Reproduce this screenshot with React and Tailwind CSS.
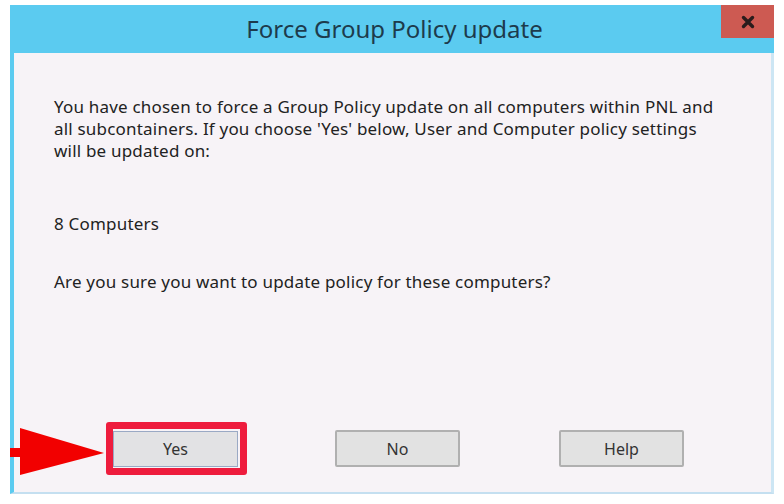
export default function App() {
  const font = { fontFamily: '"Noto Sans", "Open Sans", sans-serif' };
  return (
    <div className="w-[784px] h-[504px] bg-white relative overflow-hidden" style={font}>
      <div className="absolute left-[10px] top-[5px] w-[764px] h-[489px] flex flex-col">
        <div className="h-[48px] bg-[#5bcbf0] flex items-start relative">
          <div className="flex-1 h-full flex items-center justify-center pl-[5px]">
            <span className="text-[24px] text-[#1d3b4c]">Force Group Policy update</span>
          </div>
          <div className="absolute right-0 top-0 w-[53px] h-[33px] bg-[#cd5a52] flex items-center justify-center">
            <svg width="16" height="14" viewBox="0 0 16 14">
              <path d="M3.5 2.5 L12.5 11.5 M12.5 2.5 L3.5 11.5" stroke="#2a1c1c" strokeWidth="3.4" strokeLinecap="round" />
            </svg>
          </div>
        </div>
        <div className="flex-1 flex flex-col bg-[#f7f3f7] border-l-[4px] border-r-[3px] border-b-[2px] border-l-[#5bcbf0] border-r-[#cde6f4] border-b-[#c4dff0]">
          <div className="pl-[40px] pt-[43px] text-[17px] leading-[22px] text-[#222] tracking-[0.2px]">
            <p>You have chosen to force a Group Policy update on all computers within PNL and<br />all subcontainers. If you choose 'Yes' below, User and Computer policy settings<br />will be updated on:</p>
            <p className="mt-[51px]">8 Computers</p>
            <p className="mt-[36px]">Are you sure you want to update policy for these computers?</p>
          </div>
          <div className="mt-auto pb-[17px] pl-[92px] flex items-center">
            <div className="border-[7px] border-[#ee1c3d] rounded-[3px] pt-[2px] pb-[1px] pr-[2px]">
              <div className="w-[125px] h-[36px] bg-[#e2e2e4] border border-[#9aa9c4] flex items-center justify-center text-[16px] text-[#333]">Yes</div>
            </div>
            <div className="ml-[88px] w-[125px] h-[37px] bg-[#e2e2e2] border-2 border-[#b0b0b0] rounded-[2px] flex items-center justify-center text-[16px] text-[#333]">No</div>
            <div className="ml-[99px] w-[125px] h-[37px] bg-[#e2e2e2] border-2 border-[#b0b0b0] rounded-[2px] flex items-center justify-center text-[16px] text-[#333]">Help</div>
          </div>
        </div>
        <svg className="absolute left-0 top-[423px]" width="96" height="48" viewBox="0 0 96 48">
          <rect x="0" y="20" width="24" height="9" fill="#f20000" />
          <polygon points="10,0 10,47 94,25" fill="#f20000" />
        </svg>
      </div>
    </div>
  );
}
